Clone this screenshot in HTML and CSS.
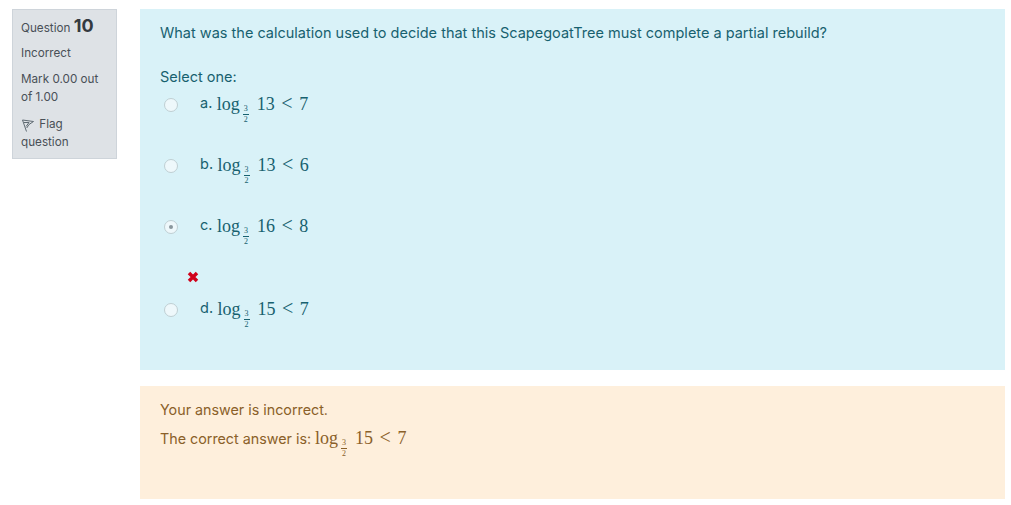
FILE: index.html
```html
<!doctype html>
<html lang="en">
<head>
	<meta charset="utf-8">
	<title>Question 10</title>
	<link rel="stylesheet" href="styles.css">
</head>
<body>
	<div class="que">
		<aside class="info">
			<h3 class="qno">Question <span class="qnum">10</span></h3>
			<p class="state">Incorrect</p>
			<p class="grade">Mark 0.00 out of 1.00</p>
			<p class="flag">
				<svg class="flag-icon" width="12" height="13" viewBox="0 0 12 13"><path d="M.5 1 11.500 2.500 7 5.500 4.700 9M.5 1 4.500 12.500M2 3.500 7 3.500 4 7.500" fill="none" stroke="#5f6a72" stroke-width="1"/></svg>
				Flag question
			</p>
		</aside>
		<main class="content">
			<section class="formulation">
				<p class="qtext">What was the calculation used to decide that this ScapegoatTree must complete a partial rebuild?</p>
				<p class="prompt">Select one:</p>
				<div class="answers">
					<label class="answer">
						<span class="radio"></span>
						<span class="letter">a.</span>
						<span class="math">log<span class="frac"><span>3</span><span>2</span></span><span class="expr">13 <span class="rel">&lt;</span> 7</span></span>
					</label>
					<label class="answer">
						<span class="radio"></span>
						<span class="letter">b.</span>
						<span class="math">log<span class="frac"><span>3</span><span>2</span></span><span class="expr">13 <span class="rel">&lt;</span> 6</span></span>
					</label>
					<label class="answer wrong">
						<span class="radio checked"></span>
						<span class="letter">c.</span>
						<span class="math">log<span class="frac"><span>3</span><span>2</span></span><span class="expr">16 <span class="rel">&lt;</span> 8</span></span>
					</label>
					<div class="mark">
						<svg width="12" height="12" viewBox="0 0 12 12"><path d="M2 2 10 10M10 2 2 10" stroke="#d0021b" stroke-width="3.500"/></svg>
					</div>
					<label class="answer">
						<span class="radio"></span>
						<span class="letter">d.</span>
						<span class="math">log<span class="frac"><span>3</span><span>2</span></span><span class="expr">15 <span class="rel">&lt;</span> 7</span></span>
					</label>
				</div>
			</section>
			<section class="outcome">
				<p class="feedback">Your answer is incorrect.</p>
				<p class="right">The correct answer is: <span class="math">log<span class="frac"><span>3</span><span>2</span></span><span class="expr">15 <span class="rel">&lt;</span> 7</span></span></p>
			</section>
		</main>
	</div>
</body>
</html>
```
FILE: styles.css
```css
html, body {
	margin: 0;
	background: #fff;
}

body {
	font-family: Inter, "Liberation Sans", sans-serif;
	font-size: 14.5px;
	padding: 9px 6px 6px 12px;
}

p, h3 {
	margin: 0;
	font-weight: normal;
}

.que {
	display: flex;
	align-items: flex-start;
	gap: 23px;
}

.info {
	box-sizing: border-box;
	width: 105px;
	height: 150px;
	flex-shrink: 0;
	padding: 7px 8px;
	background: #dee2e6;
	border: 1px solid #ced4da;
	color: #495057;
	font-size: 11.7px;
	line-height: 18px;
}

.qno {
	font-size: 11.7px;
	line-height: 18px;
}

.qnum {
	font-size: 18px;
	font-weight: 700;
	color: #343a40;
}

.state {
	margin-top: 7px;
}

.grade {
	margin-top: 8px;
}

.flag {
	margin-top: 9px;
}

.flag-icon {
	vertical-align: -4px;
	margin: 0 2px 0 1px;
}

.content {
	flex: 1;
	display: flex;
	flex-direction: column;
	gap: 16px;
}

.formulation {
	box-sizing: border-box;
	height: 361px;
	padding: 14px 20px;
	background: #d9f2f8;
	color: #17616f;
}

.qtext {
	line-height: 20px;
}

.prompt {
	margin-top: 24px;
	line-height: 20px;
}

.answers {
	display: flex;
	flex-direction: column;
	margin-top: 7px;
}

.answer {
	display: flex;
	align-items: flex-start;
	height: 61px;
}

.answer.wrong {
	height: 55px;
}

.radio {
	box-sizing: border-box;
	width: 14px;
	height: 14px;
	margin: 4px 22px 0 4px;
	border-radius: 50%;
	border: 1px solid #bfcfd3;
	background: #eef8fb;
	display: flex;
	align-items: center;
	justify-content: center;
}

.radio.checked::after {
	content: "";
	width: 4px;
	height: 4px;
	border-radius: 50%;
	background: #8a979c;
}

.letter {
	margin-right: 4.500px;
}

.math {
	font-family: "Liberation Serif", serif;
	font-size: 18px;
	line-height: 20px;
}

.frac {
	display: inline-flex;
	flex-direction: column;
	align-items: center;
	width: 6px;
	margin: 0 8px 0 3px;
	font-size: 8px;
	line-height: 9px;
	vertical-align: -1px;
}

.frac span:first-child {
	border-bottom: 1px solid currentColor;
	padding-bottom: 1px;
	width: 100%;
	text-align: center;
}

.expr {
	word-spacing: 2px;
}

.rel {
	font-size: 20px;
	line-height: 0;
}

.mark {
	height: 28px;
	padding-left: 27px;
	line-height: 0;
}

.outcome {
	box-sizing: border-box;
	height: 113px;
	padding: 14px 20px;
	background: #feefdc;
	color: #8a6029;
	font-size: 14.3px;
}

.feedback {
	line-height: 20px;
}

.right {
	margin-top: 8px;
	line-height: 20px;
}
```
